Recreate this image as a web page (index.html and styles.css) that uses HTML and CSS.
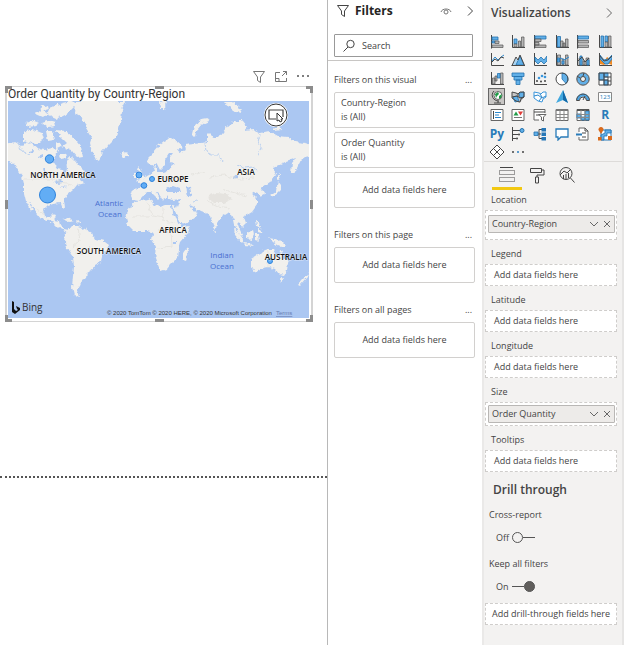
FILE: index.html
```html
<!DOCTYPE html>
<html lang="en">
<head>
<meta charset="utf-8">
<title>Report editor</title>
<link rel="stylesheet" href="styles.css">
</head>
<body>
<div class="app">
  <main class="canvas">
    <div class="page">
      <div class="visual-tools">
        <button aria-label="Filters"><svg width="14" height="14" viewBox="0 0 14 14"><path class="ln" d="M1.500 1.500h11L8.500 7v5.500L5.500 10.500V7z"/></svg></button>
        <button aria-label="Focus mode"><svg width="14" height="14" viewBox="0 0 14 14"><path class="ln" d="M6 2.500H1.500v9h11V8M1.500 8.500H5v3M8 6l4.500-4.500M9 1.500h3.500V5"/></svg></button>
        <button aria-label="More options"><svg width="14" height="14" viewBox="0 0 14 14"><g fill="#555"><circle cx="2" cy="6" r="1"/><circle cx="7" cy="6" r="1"/><circle cx="12" cy="6" r="1"/></g></svg></button>
      </div>
      <section class="visual">
        <i class="grip tl"></i><i class="grip tc"></i><i class="grip tr"></i><i class="grip ml"></i><i class="grip mr"></i><i class="grip bl"></i><i class="grip bc"></i><i class="grip br"></i>
        <h1>Order Quantity by Country-Region</h1>
        <svg class="map" viewBox="8 101 301 217" role="img" aria-label="World map">
          <defs><filter id="coast" x="0" y="0" width="100%" height="100%"><feTurbulence type="fractalNoise" baseFrequency=".22" numOctaves="3" seed="4"/><feDisplacementMap in="SourceGraphic" scale="5" xChannelSelector="R" yChannelSelector="G"/></filter></defs>
          <rect x="8" y="101" width="301" height="217" fill="#abc7f2"/>
          <g filter="url(#coast)">
            <rect x="0" y="95" width="320" height="230" fill="none"/>
            <g fill="#f1f0ed">
              <path d="M4 144L15 142 22 146 27 141 33 145 38 149 45 150 52 148 58 149 55 155 53 162 57 168 62 169 65 174 67 168 66 161 69 156 75 160 79 165 85 171 88 176 82 178 80 180 84 183 77 185 73 190 67 195 64 200 65 209 62 208 60 203 53 204 47 206 43 210 45 216 50 217 53 214 56 215 54 220 59 221 60 225 64 229 69 230 67 232 59 228 54 223 48 221 41 219 37 214 33 208 31 204 29 202 33 211 31 210 26 201 24 193 24 184 22 176 17 169 14 164 9 161 4 162z"/>
              <path d="M75 101L126 101 122 110 121 120 119 128 117 136 109 144 102 152 99 162 96 160 92 151 90 143 92 137 87 129 83 118 74 113z"/>
              <path d="M24 132l8-3 10 4 2 7-10 4-10-4zM26 123l6-3 6 2-2 4-8 1zM42 122l6-2 7 2 1 4-8 1zM34 113l8-3 6 3-5 4zM50 108l12-5 10-2 4 4-8 8-12 6-9-4zM46 131l6 0 2 9-6 1zM55 130l11 1 7 6 8 10 2 9-6 1-6-7-9-3 5-4-7-7zM56 141l6 5-6 3zM40 107l8-2 1 4-7 2zM60 154l5 0 1 4-5 1z"/>
              <path d="M121 155l4-3 4 1 0 3-5 2zM137 169l2-2 2 5 4 6-4 2-4-1 2-4zM134 173l3 0 0 4-3 1zM159 104l4-3 4 2-3 6-3 0zM225 102l7 0 6 4 4 7-6-1-7-5zM192 134l2-8 8-7 6-1 1 3-7 3-6 7-1 6zM273 127l6 0 2 3-7 1z"/>
              <path d="M133 189L139 188 143 188 141 184 137 181 143 179 147 175 151 173 154 171 153 168 157 167 157 172 163 172 168 171 171 166 175 163 170 162 170 157 173 153 169 153 165 159 165 165 160 170 157 164 153 167 148 164 147 158 153 152 158 146 164 141 171 138 177 142 183 147 177 149 180 153 186 150 185 145 194 144 202 143 207 142 207 135 210 132 213 139 219 137 223 132 228 125 236 121 243 121 247 126 244 131 253 130 260 133 269 131 278 136 288 137 296 142 305 143 315 146 315 155 305 157 301 160 298 166 294 174 291 173 292 163 296 158 287 161 281 164 274 167 276 173 272 180 266 184 261 188 264 193 262 197 258 193 255 192 252 194 257 199 257 205 252 212 244 217 246 223 242 227 240 223 237 222 240 230 243 236 240 235 236 229 234 220 231 214 227 213 221 217 217 223 216 229 213 225 210 216 206 213 200 211 194 207 190 205 193 210 198 211 196 217 189 222 182 225 178 216 174 210 173 205 175 204 177 208 179 202 180 199 173 200 168 198 167 195 164 200 162 199 159 194 155 191 159 196 159 200 154 195 151 192 147 192 143 197 139 201 133 200 131 196z"/>
              <path d="M135 202L143 201 151 199 153 204 160 207 166 205 171 206 172 212 177 219 181 227 190 226 188 233 180 242 178 249 177 258 171 264 167 269 161 271 158 264 155 255 156 247 152 239 153 233 147 231 140 231 134 231 128 225 126 218 128 211z"/>
              <path d="M187 248l2 4-3 8-3-1 0-6zM66 232L71 226 78 226 86 229 92 233 95 239 104 241 109 245 107 250 103 254 101 262 94 266 92 270 87 273 86 278 82 281 80 286 77 290 79 298 74 295 72 287 73 276 74 267 73 257 68 250 65 243z"/>
              <path d="M252 259L258 255 262 251 267 249 274 249 275 254 279 257 280 249 284 257 288 264 287 270 284 275 279 274 275 269 268 267 260 269 254 272 252 267zM281 278l3 1-2 3-2-1zM234 229l4 3 6 8-2 3-7-8zM243 243l9 1 3 2-10-1zM247 234l6-4 1 4-3 6-4-1zM256 234l4 0-2 3 1 4-3-1zM269 238l5 1 6 1 5 5 2 2-5 0-5-2-4-3zM256 219l3 3 1 6-3-2zM258 229l4 1-1 3-3-1zM278 181l3 4 0 5-4 4-6 3-1-2 6-4zM278 173l2 6-2 1zM303 279l4-4 2-3-1 5-8 9-2-1zM214 229l2 3-1 2zM63 219l6-1 5 3-4 1zM76 221l5 1-3 2z"/>
            </g>
            <g fill="#abc7f2"><path d="M167 189l5-3 8 3 1 3-8 0-6 0zM186 186l4 1 1 5 1 6-4-1-1-5zM54 182l5-2 5 2-5 2zM61 186l6 1-4 1zM173 241l3 0 0 3-3 0zM38 157l5-2 0 2-5 2zM29 151l4-1 1 2-5 1zM43 168l2 0 1 6-2-1zM233 178l4-3 0 2-4 3z"/></g>
            <g fill="none" stroke="#b8cff0"><path d="M205 143l1 9 6 3 7 0 4 7M260 134l-2 8 4 6-4 7M18 143l4 8 8 4M192 202l5-1M237 165l8 3 8-1 5 4"/></g>
            <g fill="none" stroke="#dedcd7" stroke-width=".6"><path d="M24 179h29l8 4 12 2M36 209l9 5M78 228l2 13-8 7M91 246l-8 8-7-1M147 203l5 12 12 2M132 216h17M163 207v14l12 2M158 230l13 2 1 14-14 2M207 201l11 5 12 2M209 177l15-2 15 4 15-1M224 190l15 4 8 2M268 250v18M192 175l13-3"/></g>
            <path d="M207 197l8-4 12 1 6 5-9 4-10 0z" fill="#e5e3df"/>
          </g>
          <g class="bubbles"><circle cx="49.500" cy="159" r="4.200"/><circle cx="47.500" cy="195" r="8"/><circle cx="139" cy="175" r="3"/><circle cx="152" cy="179" r="2.500"/><circle cx="144" cy="185.500" r="2.800"/><circle cx="270" cy="261" r="2.500"/></g>
          <g class="land"><text x="63" y="178">NORTH AMERICA</text><text x="109" y="254">SOUTH AMERICA</text><text x="173" y="182">EUROPE</text><text x="246" y="175">ASIA</text><text x="173" y="233">AFRICA</text><text x="286" y="260">AUSTRALIA</text></g>
          <g class="sea"><text x="109" y="206">Atlantic</text><text x="110" y="217">Ocean</text><text x="222" y="258">Indian</text><text x="222" y="269">Ocean</text></g>
          <g><circle cx="276" cy="115" r="12" fill="#fff"/><circle cx="276" cy="115" r="11" fill="#fff" stroke="#333"/><path d="M276 119h-7v-9h14v7" fill="none" stroke="#444" stroke-width="1.200"/><path d="M277 113v8l2-1 1 2 2-1-1-2h2z" fill="#fff" stroke="#333"/></g>
          <path d="M12 301l2 1v7l2 2 2-1-1-1-1-3 4 2v2l-5 4-3-2z" fill="#111"/>
          <text class="bing" x="22" y="311">Bing</text>
          <text class="credit" x="107" y="315">© 2020 TomTom © 2020 HERE, © 2020 Microsoft Corporation</text>
          <text class="credit terms" x="276" y="315">Terms</text>
        </svg>
      </section>
    </div>
  </main>

  <aside class="filters">
    <header>
      <svg width="14" height="14" viewBox="0 0 14 14"><path class="dk" d="M1.500 1.500h11L8.500 7v5.500L5.500 10.500V7z"/></svg>
      <h2>Filters</h2>
      <button aria-label="Show filter pane"><svg width="12" height="12" viewBox="0 0 12 12"><path class="ln" d="M1 7C2 3 10 3 11 7"/><circle class="ln" cx="6" cy="7" r="2"/></svg></button>
      <button aria-label="Collapse filters"><svg width="10" height="12" viewBox="0 0 10 12"><path class="dk" d="M3 1.500L7.500 6 3 10.500"/></svg></button>
    </header>
    <div class="search"><label class="field"><svg width="14" height="14" viewBox="0 0 14 14"><circle class="dk" cx="8.500" cy="5" r="3.700"/><path class="dk" d="M6 8L1.500 12.500"/></svg><input type="text" placeholder="Search" aria-label="Search"></label></div>
    <div class="sections">
      <section><div class="shead"><h3>Filters on this visual</h3><button aria-label="More">...</button></div>
        <div class="cards"><div class="card"><span>Country-Region</span><span>is (All)</span></div><div class="card"><span>Order Quantity</span><span>is (All)</span></div><div class="card drop">Add data fields here</div></div></section>
      <section><div class="shead"><h3>Filters on this page</h3><button aria-label="More">...</button></div><div class="card drop">Add data fields here</div></section>
      <section><div class="shead"><h3>Filters on all pages</h3><button aria-label="More">...</button></div><div class="card drop">Add data fields here</div></section>
    </div>
  </aside>

  <aside class="viz">
    <header><h2>Visualizations</h2><button aria-label="Collapse visualizations"><svg width="10" height="12" viewBox="0 0 10 12"><path class="dk thin" d="M3 1.500L7.500 6 3 10.500"/></svg></button></header>
    <div class="gallery">
      <button aria-label="Stacked bar"><svg viewBox="0 0 14 14"><path class="ax" d="M1.500 0v13.500"/><path class="b" d="M2 2h6v3H2zM2 6h3v2H2z"/><path class="g" d="M5 6h4v2.500H5zM2 10h11v2.500H2z"/></svg></button>
      <button aria-label="Stacked column"><svg viewBox="0 0 14 14"><path class="ax" d="M1.500 0v12.500H14"/><path class="b" d="M3 4h3v5H3z"/><path class="g" d="M3 9h3v3H3zM7.500 6h2v6h-2zM10.500 2H13v10h-2.500z"/></svg></button>
      <button aria-label="Clustered bar"><svg viewBox="0 0 14 14"><path class="ax" d="M1.500 0v13.500"/><path class="b" d="M2 1h11v3H2z"/><path class="g" d="M2 4h6v2.500H2zM2 7.500h4V10H2zM2 10h11v2.500H2z"/></svg></button>
      <button aria-label="Clustered column"><svg viewBox="0 0 14 14"><path class="ax" d="M1.500 0v12.500H14"/><path class="b" d="M2.500 1.500h3V12h-3z"/><path class="g" d="M5.500 6H8v6H5.500zM8 8h2v4H8zM10.500 4H13v8h-2.500z"/></svg></button>
      <button aria-label="100% stacked bar"><svg viewBox="0 0 14 14"><path class="ax" d="M1.500 0v13.500"/><path class="b" d="M2 1h10.500v3H2z"/><path class="g" d="M2 5.500h10.500V8H2zM2 10h10.500v2.500H2z"/></svg></button>
      <button aria-label="100% stacked column"><svg viewBox="0 0 14 14"><path class="ax" d="M1.500 0v12.500H14"/><path class="b" d="M3 1h2.500v11H3zM7 1h2.500v6H7z"/><path class="g" d="M7 7h2.500v5H7zM10.500 1H13v11h-2.500z"/></svg></button>

      <button aria-label="Line"><svg viewBox="0 0 14 14"><path class="ax" d="M1.500 0v12.500H14"/><path class="bl" d="M2 8l3-4 3 3 3-3 3-2"/><path class="ax" d="M2 9l3-3 3 2 3-4 3 1"/></svg></button>
      <button aria-label="Area"><svg viewBox="0 0 14 14"><path d="M1 12L5 5l3 7z" fill="#a9d3f0"/><path class="b" d="M5 12l4-9 4 9z"/><path class="ax" d="M1 12.500L5 4l2 3M.500 12.500H14M7 7l2-5 4.500 10.500"/></svg></button>
      <button aria-label="Stacked area"><svg viewBox="0 0 14 14"><path class="ax" d="M1.500 0v12.500H14"/><path class="b" d="M2 4l3 3 3-3 3 3 3-4v5l-3 3-3-3-3 3-3-3z"/></svg></button>
      <button aria-label="Line and stacked column"><svg viewBox="0 0 14 14"><path class="ax" d="M1.500 0v12.500H14"/><path class="g" d="M2.500 2h3v10h-3zM7 6h2v6H7zM10.500 2H13v10h-2.500z"/><path class="b" d="M2.500 5h2v4h-2zM7 8h2v3H7z"/><path class="bl" d="M2 8l4-3 3 2 5-3"/></svg></button>
      <button aria-label="Line and clustered column"><svg viewBox="0 0 14 14"><path class="ax" d="M1.500 0v12.500H14"/><path class="g" d="M3 5h3v7H3zM7 8h2v4H7zM10 5h3v7h-3z"/><path class="b" d="M4 3h2v9H4zM11 7h2v5h-2z"/><path class="ax" d="M2 8l4-4 3 5 4-4"/></svg></button>
      <button aria-label="Ribbon"><svg viewBox="0 0 14 14"><path d="M2 5l4 4 3-5 5 3v5l-5-2-3 2-4-1z" fill="#f08a24"/><path class="b" d="M2 2l4 5 4-1 4-4v4l-4 5H7L2 6z"/><path class="ax" d="M1.500 0v12.500H14M2 3l4 5 4-1 4-4"/></svg></button>

      <button aria-label="Waterfall"><svg viewBox="0 0 14 14"><path class="ax" d="M1.500 0v12.500H14"/><path class="g" d="M2.500 6H5v6H2.500zM5 4h2v5H5zM10.500 1H13v11h-2.500z"/><path class="b" d="M7.500 1.500H10V6H7.500z"/></svg></button>
      <button aria-label="Funnel"><svg viewBox="0 0 14 14"><path class="b" d="M1 1h12v3.500H1zM3 4.500h8V8H3zM5 8h4v4.500H5z"/></svg></button>
      <button aria-label="Scatter"><svg viewBox="0 0 14 14"><path class="ax" d="M1.500 0v12.500H14"/><g fill="#444"><circle cx="4" cy="9" r="1"/><circle cx="8" cy="9.500" r="1"/><circle cx="12" cy="1.500" r="1"/><circle cx="12" cy="9" r="1"/></g><g fill="#3b96db"><circle cx="6" cy="6" r="1.300"/><circle cx="9" cy="4" r="1.300"/><circle cx="12" cy="5" r="1.300"/></g></svg></button>
      <button aria-label="Pie"><svg viewBox="0 0 14 14"><circle cx="7" cy="7" r="6" fill="#fff"/><path class="b" d="M7 1a6 6 0 0 1 4 10.500L7 7z"/><circle class="ax" cx="7" cy="7" r="6"/></svg></button>
      <button aria-label="Donut"><svg viewBox="0 0 14 14"><circle cx="7" cy="7" r="4.300" fill="none" stroke="#62b0e8" stroke-width="3.500"/><circle class="ax" cx="7" cy="7" r="6.200"/><circle class="ax" cx="7" cy="7" r="2.500"/><path class="ax" d="M1 4l3 2M8 1l-1 3"/></svg></button>
      <button aria-label="Treemap"><svg viewBox="0 0 14 14"><path fill="#fff" d="M1 1h12v12H1z"/><path class="b" d="M1 1h5v7H1zM6 1h4v4H6zM6 8h4v5H6z"/><path class="ax" d="M1 1h12v12H1zM6 1v12M10 5v8M6 5h7M1 8h9M10 9h3"/></svg></button>

      <button class="on" aria-label="Map"><svg viewBox="0 0 14 14"><circle cx="8" cy="5.500" r="4" fill="#fff" stroke="#666"/><path d="M5 4l3-2 1 2-2 2-1 2zM9 6l3-2-1 4-2 1z" fill="#1d9b45"/><path class="ax" d="M4 1C0 5 3 11 9 11M8 11v2M4 13h7"/></svg></button>
      <button aria-label="Filled map"><svg viewBox="0 0 14 14"><path fill="#c8c8c8" d="M1 2l6 1 6-1v5l-4 6-5-2-3-4z"/><path class="b" d="M8 3l5-1v5l-4 1zM2 7l4-1 2 5-4 1z"/><path class="ax" d="M1 2l4 1 2 1 2-2 4 0v5l-3 2-1 3-4-1-4-3zM1 7l5-1 3 2 4-1M7 4v3"/></svg></button>
      <button aria-label="Shape map"><svg viewBox="0 0 14 14"><path d="M1 2l5 1 2 1 2-2 3 0v5l-3 2-1 3-4-1-4-3z" fill="#fff" stroke="#3b96db"/><path class="bl" d="M1 6l4-1 4 3 4-2M7 4l2 3-3 4"/></svg></button>
      <button aria-label="ArcGIS map"><svg viewBox="0 0 14 14"><path d="M8 0l5 13-5-3-7 3z" fill="#42a8df"/><path d="M8 0l5 13-5-3z" fill="#1269a8"/></svg></button>
      <button aria-label="Gauge"><svg viewBox="0 0 14 14"><path d="M2 10a5 5 0 0 1 10 0" fill="none" stroke="#4ca3e0" stroke-width="3"/><path class="ax" d="M.500 10.500a6.500 6.500 0 0 1 13 0h-3a3.500 3.500 0 0 0-7 0zM7 10l2-4"/></svg></button>
      <button aria-label="Card"><svg viewBox="0 0 14 14"><path d="M.500 2.500h13v9H.500z" fill="#fff" stroke="#888"/><text x="7" y="9" class="num">123</text></svg></button>

      <button aria-label="Multi-row card"><svg viewBox="0 0 14 14"><path class="wh" d="M1 1.500h12v11H1z"/><path class="bl" d="M5 4.500h6M5 7h4M5 9.500h6"/><path class="ax" d="M3.500 3v8"/></svg></button>
      <button aria-label="KPI"><svg viewBox="0 0 14 14"><path class="wh" d="M1 1.500h12v11H1z"/><path d="M2.500 7.500l2.500-4 2.500 4z" fill="#239b49"/><path d="M7 3.500h5l-2.500 4z" fill="#df3c38"/><path class="ln" d="M3 9.500h8"/></svg></button>
      <button aria-label="Slicer"><svg viewBox="0 0 14 14"><path class="wh" d="M6 12H1V1.500h11V5"/><path class="ax" d="M1 4h11M3 7h3"/><path class="wh" d="M5.500 6.500H13L10.500 9v4l-2-1V9z"/></svg></button>
      <button aria-label="Table"><svg viewBox="0 0 14 14"><path class="wh" d="M1 1.500h12v11H1z"/><path fill="#777" d="M1 1h12v2H1z"/><path class="grid" d="M1 6.500h12M1 9.500h12M5 2v11M9 2v11"/></svg></button>
      <button aria-label="Matrix"><svg viewBox="0 0 14 14"><path class="wh" d="M1 1.500h12v11H1z"/><path class="b" d="M1 6h4v4H1zM9 3h4v9H9zM5 9h4v3H5z"/><path fill="#555" d="M1 1h12v2H1z"/><path class="grid" d="M1 6.500h12M1 9.500h12M5 2v11M9 2v11"/></svg></button>
      <button aria-label="R script" class="txt">R</button>

      <button aria-label="Python" class="txt">Py</button>
      <button aria-label="Key influencers"><svg viewBox="0 0 14 14"><path class="ax" d="M1.500 0v14M2 3.500h8M2 7.500h5M2 11.500h3"/><circle cx="11" cy="3.500" r="2" fill="#62b0e8" stroke="#2372ae"/><circle cx="8" cy="7.500" r="1" fill="#444"/><circle cx="6" cy="11.500" r="1" fill="#444"/></svg></button>
      <button aria-label="Decomposition tree"><svg viewBox="0 0 14 14"><path class="ax" d="M4 7h4M6 2.500v9M6 2.500h3M6 11.500h3"/><path class="b" d="M1 5h4v3.500H1z"/><path d="M8.500 1H13v3.500H8.500zM8.500 5.500H13V9H8.500zM8.500 10H13v3.500H8.500z" fill="#2677b7"/></svg></button>
      <button aria-label="Q&amp;A"><svg viewBox="0 0 14 14"><path d="M1 2h12v8H6l-3 3v-3H1z" fill="#fff" stroke="#287bb9" stroke-width="1.300"/></svg></button>
      <button aria-label="Paginated report"><svg viewBox="0 0 14 14"><path class="wh" d="M3 5V1h6l3 3v9H3v-3"/><path class="ax" d="M9 1v3h3M6 6h4M6 10h4"/><path d="M0 7.500h6" stroke="#287bb9" stroke-width="2"/></svg></button>
      <button aria-label="ArcGIS"><svg viewBox="0 0 14 14"><path d="M3 3h10v10H3z" fill="#fff" stroke="#287bb9"/><path class="b" d="M7 3h6v3H9v3H6v4H3V8l4-2z"/><path d="M3 0a2.500 2.500 0 0 1 2.500 3L3 7 .500 3A2.500 2.500 0 0 1 3 0zM0 10h3.500v3.500H0zM10 9h4v4h-4z" fill="#d96b1d"/></svg></button>

      <button aria-label="Power Apps"><svg viewBox="0 0 14 14"><path d="M7 0l3.500 3.500L7 7 3.500 3.500zM3.500 3.500L7 7l-3.500 3.500L0 7zM10.500 3.500L14 7l-3.500 3.500L7 7zM7 7l3.500 3.500L7 14l-3.500-3.500z" fill="#fff" stroke="#444"/></svg></button>
      <button aria-label="Get more visuals"><svg viewBox="0 0 14 14"><circle cx="2" cy="7" r="1" fill="#444"/><circle cx="7" cy="7" r="1" fill="#2b7fc1"/><circle cx="12" cy="7" r="1" fill="#444"/></svg></button>
    </div>
    <div class="tabs">
      <button class="active" aria-label="Fields"><svg width="18" height="18" viewBox="0 0 18 18"><path class="dk" d="M2 1.500h13"/><path class="dk dots" d="M1.500 4.500h15v4h-15zM1.500 11.500h15v4h-15z"/></svg></button>
      <button aria-label="Format"><svg width="18" height="18" viewBox="0 0 18 18"><path class="dk" d="M2.500 2.500h11v4h-11zM13.500 4H16v5H9v2M7.500 11h3v6h-3z"/></svg></button>
      <button aria-label="Analytics"><svg width="18" height="18" viewBox="0 0 18 18"><circle class="dk" cx="8" cy="7.500" r="6"/><path class="dk" d="M12.500 12l4 4.500M2 9l4-4 3 2 4-4M5.500 9v4M8 8v5M10.500 7v5"/></svg></button>
    </div>
    <div class="wells">
      <section><h3>Location</h3><div class="well tall"><div class="chip"><span>Country-Region</span><button aria-label="Field options"><svg width="10" height="8" viewBox="0 0 10 8"><path class="dk thin" d="M1 2l4 4 4-4"/></svg></button><button aria-label="Remove field"><svg width="8" height="8" viewBox="0 0 8 8"><path class="dk thin" d="M1 1l6 6M7 1L1 7"/></svg></button></div></div></section>
      <section><h3>Legend</h3><div class="well">Add data fields here</div></section>
      <section><h3>Latitude</h3><div class="well">Add data fields here</div></section>
      <section><h3>Longitude</h3><div class="well">Add data fields here</div></section>
      <section><h3>Size</h3><div class="well filled"><div class="chip"><span>Order Quantity</span><button aria-label="Field options"><svg width="10" height="8" viewBox="0 0 10 8"><path class="dk thin" d="M1 2l4 4 4-4"/></svg></button><button aria-label="Remove field"><svg width="8" height="8" viewBox="0 0 8 8"><path class="dk thin" d="M1 1l6 6M7 1L1 7"/></svg></button></div></div></section>
      <section><h3>Tooltips</h3><div class="well">Add data fields here</div></section>
    </div>
    <div class="drill">
      <h2>Drill through</h2>
      <label for="cross">Cross-report</label>
      <div class="switch"><span>Off</span><input type="checkbox" role="switch" id="cross"></div>
      <label for="keep">Keep all filters</label>
      <div class="switch"><span>On</span><input type="checkbox" role="switch" id="keep" checked></div>
      <div class="well">Add drill-through fields here</div>
    </div>
  </aside>
</div>
</body>
</html>
```
FILE: styles.css
```css
* { box-sizing: border-box; }
body { margin: 0; background: #fff; color: #444; font: 9px/14px "Open Sans", "Noto Sans", sans-serif; }
h1, h2, h3 { margin: 0; font-weight: 400; font-size: 9px; }
button { margin: 0; padding: 0; border: 0; background: none; color: inherit; font: inherit; display: flex; align-items: center; justify-content: center; }
svg { display: block; }
.ln { fill: none; stroke: #777; }
.dk { fill: none; stroke: #444; }
.thin { stroke: #666; }
.dots { stroke-dasharray: 1 1; }

.app { display: flex; min-height: 100vh; }
.canvas { flex: 1; min-width: 0; }
.page { height: 478px; padding: 70px 14px 0 5px; border-bottom: 2px dotted #555; }
.visual-tools { display: flex; justify-content: flex-end; gap: 8px; padding-right: 3px; margin-bottom: 2px; }

.visual { position: relative; border: 1px solid #d4d4d4; border-right-width: 2px; border-left-width: 2px; padding: 0 2px 3px 1px; }
.visual h1 { color: #333; font: 12px/14px Roboto, sans-serif; white-space: nowrap; }
.map { width: 100%; height: auto; }
.bubbles { fill: #62adf5; stroke: #2f83dc; }
.land { font: 600 8px "Open Sans", sans-serif; fill: #111; text-anchor: middle; stroke: #fff; stroke-width: 1px; stroke-opacity: .5; paint-order: stroke; }
.sea { font: 8px "Open Sans", sans-serif; fill: #4a6fd0; text-anchor: middle; }
.bing { font: 10px "Open Sans", sans-serif; fill: #333; }
.credit { font: 6px "Liberation Sans", sans-serif; fill: #333; }
.terms { fill: #667bb0; text-decoration: underline; }
.grip { position: absolute; width: 9px; height: 3px; background: #8c8c8c; }
.tl, .tr, .bl, .br { width: 7px; height: 7px; background: none; border: 0 solid #8c8c8c; }
.tl { top: -1px; left: -2px; border-width: 3px 0 0 3px; }
.tr { top: -1px; right: -2px; border-width: 3px 3px 0 0; }
.grip.bl { bottom: -1px; left: -2px; border-width: 0 0 3px 3px; }
.br { bottom: -1px; right: -2px; border-width: 0 3px 3px 0; }
.tc { top: -1px; left: calc(50% - 4px); }
.bc { bottom: -1px; left: calc(50% - 4px); }
.ml, .mr { width: 3px; height: 9px; top: calc(50% - 4px); }
.ml { left: -2px; }
.mr { right: -2px; }

.filters { width: 155px; flex: none; border-left: 1px solid #b8b8b8; }
.filters header { display: flex; align-items: center; gap: 5px; height: 22px; padding: 0 7px 0 8px; }
.filters h2 { flex: 1; font-size: 12px; font-weight: 700; color: #252423; }
.filters header button + button { margin-left: 8px; }
.search { padding: 12px 9px 3px 6px; border-bottom: 1px solid #c8c6c4; }
.field { display: flex; align-items: center; gap: 6px; height: 23px; padding: 0 7px; border: 1px solid #999; border-radius: 1px; }
.field input { flex: 1; min-width: 0; padding: 0; border: 0; outline: 0; background: none; font: inherit; color: #444; }
.field input::placeholder { color: #444; opacity: 1; }
.sections { display: flex; flex-direction: column; gap: 15px; padding: 7px 7px 7px 6px; }
.shead { display: flex; justify-content: space-between; align-items: center; height: 24px; padding-right: 3px; }
.cards { display: flex; flex-direction: column; gap: 4px; }
.card { display: flex; flex-direction: column; justify-content: center; height: 36px; padding: 0 6px; border: 1px solid #d2d0ce; border-radius: 2px; }
.drop { align-items: center; }

.viz { width: 142px; flex: none; background: #f3f2f1; border-left: 2px solid #eae9e8; border-right: 2px solid #e6e5e4; }
.viz header { display: flex; align-items: center; justify-content: space-between; height: 33px; padding: 0 8px 7px 7px; }
.viz h2 { font-size: 12px; font-weight: 600; color: #444; }
.gallery { display: grid; grid-template: repeat(7, 1fr) / repeat(6, 1fr); place-items: center; height: 128px; margin: 0 6px 0 2px; }
.gallery button { width: 17px; height: 17px; }
.gallery svg { width: 14px; height: 14px; }
.gallery .on { background: #c8c6c4; border: 1px solid #666; }
.gallery .txt { color: #287bb9; font-size: 12px; font-weight: 700; }
.ax { fill: none; stroke: #484848; }
.grid { fill: none; stroke: #888; }
.b { fill: #62b0e8; stroke: #2372ae; stroke-width: .8px; }
.g { fill: #b5b5b5; stroke: #555; stroke-width: .7px; }
.bl { fill: none; }
svg .bl { stroke: #2b86cb; }
.wh { fill: #fff; stroke: #666; }
.num { font: 6px "Open Sans", sans-serif; fill: #287bb9; text-anchor: middle; }
.tabs { display: flex; height: 29px; padding-left: 8px; border-top: 1px solid #dddbd9; }
.tabs button { width: 30px; border-bottom: 3px solid transparent; }
.tabs .active { border-bottom-color: #f2c811; }
.wells { display: flex; flex-direction: column; gap: 4px; padding: 0 5px 0 1px; }
.wells h3 { padding-left: 6px; line-height: 20px; }
.well { display: flex; align-items: center; height: 22px; padding: 0 8px; background: #fff; border: 1px dashed #cfcdcb; white-space: nowrap; }
.tall { height: 30px; padding: 4px 1px 0 2px; align-items: flex-start; }
.filled { height: 24px; padding: 0 1px 0 2px; }
.chip { flex: 1; display: flex; align-items: center; gap: 4px; height: 18px; padding: 0 3px; background: #edebe9; border: 1px solid #b9b7b5; border-radius: 1px; }
.chip span { flex: 1; }
.drill { display: flex; flex-direction: column; padding: 6px 5px 0 1px; }
.drill h2 { padding-left: 8px; line-height: 24px; }
.drill label { padding: 4px 4px 0; line-height: 18px; }
.switch { display: flex; align-items: center; gap: 3px; height: 27px; padding-left: 11px; }
.switch input { appearance: none; display: flex; align-items: center; width: 23px; height: 9px; margin: 0; }
.switch input::before { content: ""; width: 9px; height: 9px; border: 1px solid #555; border-radius: 50%; }
.switch input::after { content: ""; flex: 1; height: 1px; background: #555; }
.switch input:checked { flex-direction: row-reverse; }
.switch input:checked::before { background: #605e5c; }
.drill .well { padding: 0 6px; margin-top: 3px; }
```
